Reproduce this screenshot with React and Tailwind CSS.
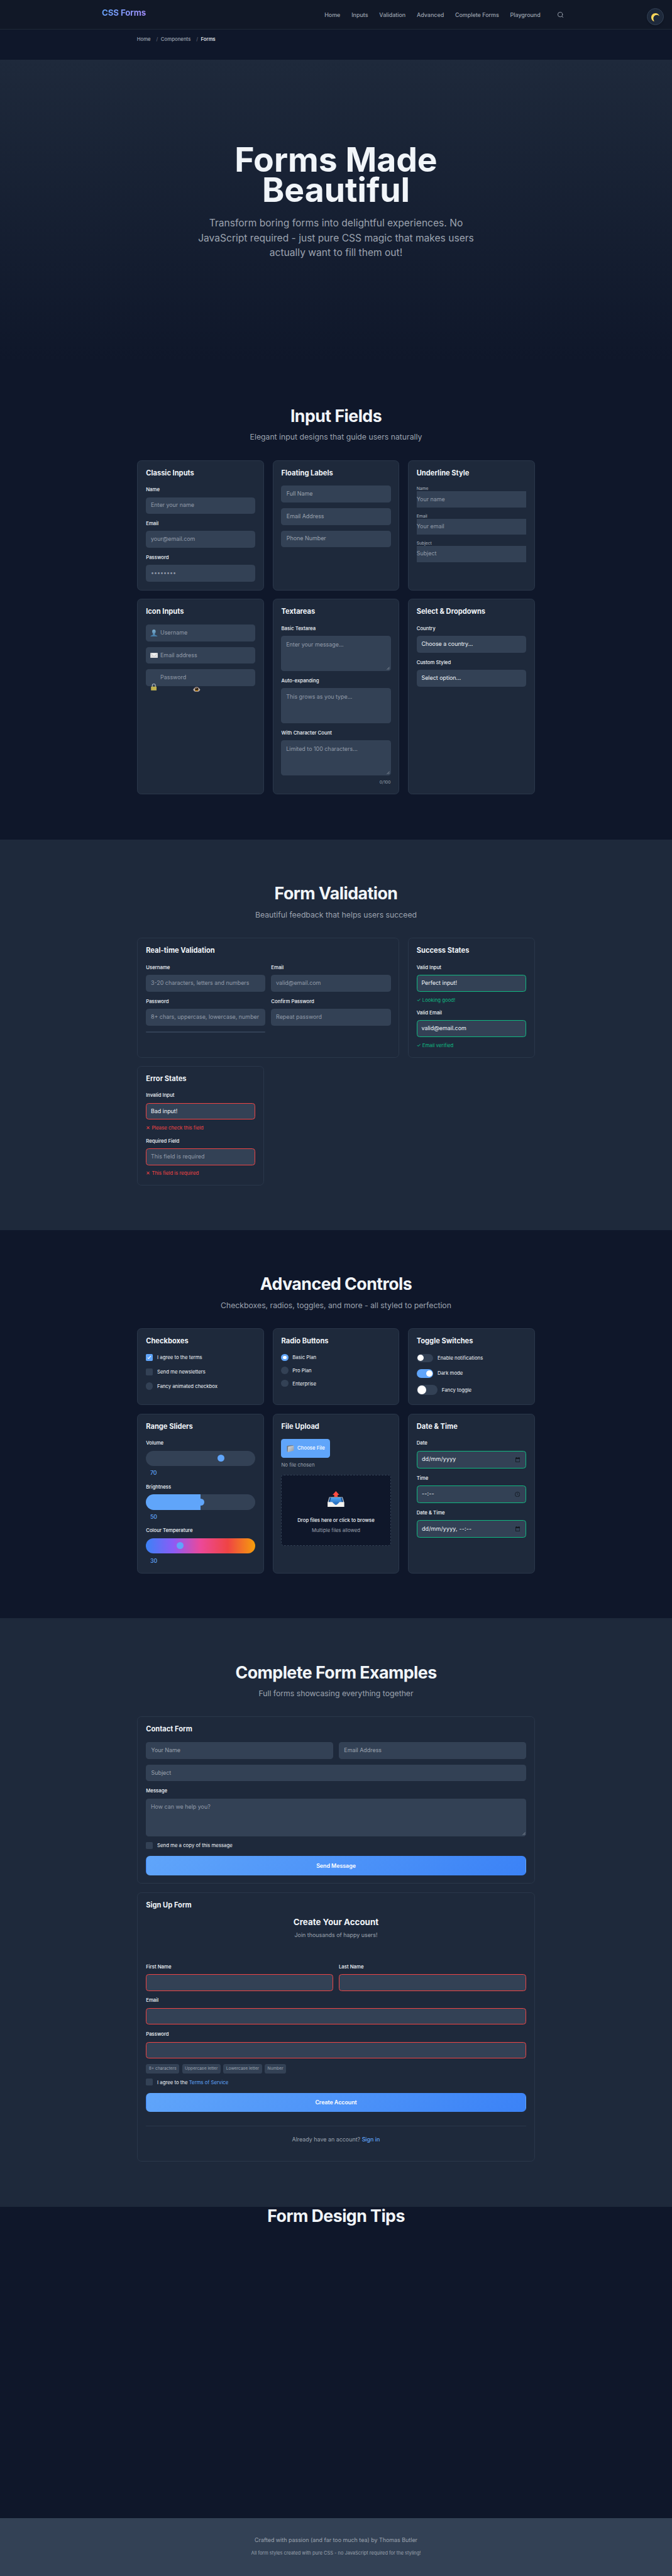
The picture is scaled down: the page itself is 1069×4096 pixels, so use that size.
import { Search } from "lucide-react";

function MoonIcon() {
  return (
    <svg className="w-6 h-6" viewBox="0 0 24 24">
      <defs>
        <linearGradient id="moon" x1="0" y1="0" x2="1" y2="1">
          <stop offset="0" stopColor="#f5b92e" />
          <stop offset="0.35" stopColor="#ffe066" />
          <stop offset="1" stopColor="#f2b632" />
        </linearGradient>
      </defs>
      <path d="M9 24 C3 22 0 17 0 12 C0 5 5 0 12 0 C17.5 0 22 3.5 24 9 C20 4 13.500 3.800 9.500 7 C5 10.700 4.800 18 9 24Z" fill="url(#moon)" />
    </svg>
  );
}

function UserIcon() {
  return (
    <svg className="w-[21px] h-[21px]" viewBox="0 0 21 21">
      <defs>
        <linearGradient id="bust" x1="0" y1="0" x2="0" y2="1">
          <stop offset="0" stopColor="#7fb0cf" />
          <stop offset="1" stopColor="#3d76a3" />
        </linearGradient>
      </defs>
      <path d="M10.500 0 C13.800 0 15.700 2.400 15.500 6 C15.300 9 14.200 11 13 12.200 C13 14.500 13.600 15.300 15.500 16 C18.500 17 20.500 17.800 21 21 H0 C.5 17.800 2.500 17 5.500 16 C7.400 15.300 8 14.500 8 12.200 C6.800 11 5.700 9 5.500 6 C5.300 2.400 7.200 0 10.500 0Z" fill="url(#bust)" />
    </svg>
  );
}

function MailIcon() {
  return (
    <svg className="w-[22px] h-[15px]" viewBox="0 0 22 15">
      <rect x="0.300" y="0.300" width="21.400" height="14.400" rx="1" fill="#e4e4e4" stroke="#bdbdbd" strokeWidth=".6" />
      <path d="M1 14 L8 7.500 M21 14 L14 7.500" stroke="#bcbcbc" strokeWidth=".8" />
      <path d="M1 1 L10 9.500 Q11 10.300 12 9.500 L21 1" fill="#f3f3f3" stroke="#a9a9a9" strokeWidth=".9" />
    </svg>
  );
}

function LockIcon() {
  return (
    <svg className="w-[17px] h-[20px]" viewBox="0 0 17 20">
      <path d="M4 10 V5.500 C4 2.500 6 1 8.500 1 S13 2.500 13 5.500 V10" fill="none" stroke="#b4bcc4" strokeWidth="1.900" />
      <rect x="0.500" y="8.500" width="16" height="11" rx="1" fill="#c9ba55" />
      <path d="M.5 11.500h16M.5 14h16M.5 16.500h16" stroke="#a89a3f" strokeWidth=".8" />
    </svg>
  );
}

function EyeIcon() {
  return (
    <svg className="w-[21px] h-[16px]" viewBox="0 0 21 16">
      <path d="M0 8.500 C3 3 7 0 10.500 0 S18 3 21 8.500 C18 13 14.500 16 10.500 16 S3 13 0 8.500Z" fill="#8b7c7c" />
      <path d="M1.500 8.500 C4 4.500 7.500 2 10.500 2 S17 4.500 19.500 8.500 C17 12 14 14 10.500 14 S4 12 1.500 8.500Z" fill="#d8d3d3" />
      <circle cx="10.500" cy="7.500" r="5.400" fill="#4a3012" />
      <path d="M6 8.500 A4.600 4.600 0 0 0 15 8.500 L12 9.500 H9Z" fill="#d3951f" />
      <circle cx="10.500" cy="6.800" r="2.500" fill="#120a05" />
      <circle cx="9" cy="4.800" r="1" fill="#efe9e2" />
    </svg>
  );
}

function FolderIcon() {
  return (
    <svg className="w-[21px] h-[20px]" viewBox="0 0 21 20">
      <defs>
        <linearGradient id="folder" x1="0" y1="0" x2="1" y2="1">
          <stop offset="0" stopColor="#d7dbdf" />
          <stop offset="1" stopColor="#8f969d" />
        </linearGradient>
      </defs>
      <path d="M1 2 L8 1 L9.500 0.300 L18 0.500 L19.500 2 V4 L3 19 L1 17Z" fill="#6c737a" />
      <path d="M4 5.500 Q4 4 5.500 3.800 L19 1.500 Q20.500 1.300 20.500 3 V14 Q20.500 15.300 19 15.800 L4.500 19.800 Q3 20 3 18.500Z" fill="url(#folder)" />
    </svg>
  );
}

function TrayIcon() {
  return (
    <svg className="w-[48px] h-[46px]" viewBox="0 0 48 46">
      <defs>
        <linearGradient id="tray" x1="0" y1="0" x2="0" y2="1">
          <stop offset="0" stopColor="#47a0f2" />
          <stop offset="1" stopColor="#2a6cb8" />
        </linearGradient>
      </defs>
      <path d="M5 17 H43 L47.500 32 V44 Q47.500 46 45.500 46 H2.500 Q.5 46 .5 44 V32Z" fill="#d8d6d2" />
      <path d="M6.500 18.500 H41.500 L45 31.500 H33 L24 40 L15 31.500 H3Z" fill="url(#tray)" />
      <path d="M6.500 18.500 H10 L7 31 H3Z M41.500 18.500 H38 L41 31 H45Z" fill="#1d4f8d" />
      <path d="M.5 31.500 H13 C15.500 31.500 16.500 38.500 24 38.500 S32.500 31.500 35 31.500 H47.500 V44 Q47.500 46 45.500 46 H2.500 Q.5 46 .5 44Z" fill="#f3f2ef" />
      <path d="M13.500 31.500 H34.500 L27 38 Q24 40 21 38Z" fill="#2f78c8" />
      <path d="M24 0 L33.500 11 H29 V16 H19 V11 H14.500Z" fill="#ff4d42" />
    </svg>
  );
}

function CalendarIcon() {
  return (
    <svg className="w-[13px] h-[14px]" viewBox="0 0 13 14">
      <path d="M0 1.400h2V0h1.500v1.400h6V0H11v1.400h2V14H0Z M1.400 5v7.600h10.200V5Z" fill="#10151c" fillRule="evenodd" />
    </svg>
  );
}

function ClockIcon() {
  return (
    <svg className="w-[15px] h-[15px]" viewBox="0 0 15 15">
      <circle cx="7.500" cy="7.500" r="6.700" fill="none" stroke="#10151c" strokeWidth="1.400" />
      <path d="M7.500 3.500 V7.800 L10.300 9.800" fill="none" stroke="#10151c" strokeWidth="1.200" />
    </svg>
  );
}

function Grip() {
  return (
    <svg className="absolute right-[2px] bottom-[3px] w-[9px] h-[9px]" viewBox="0 0 9 9">
      <path d="M1 8.500 L8.500 1 M5 8.500 L8.500 5" stroke="#c3c8ce" strokeWidth="1" />
    </svg>
  );
}

function Card({ title, className = "", children }) {
  return (
    <div className={"box-border rounded-[12px] border border-[#2a374a] bg-[#1e293b] p-[23.2px] " + className}>
      <h3 className="mb-6 text-[20px] leading-[24px] font-bold text-[#f1f5f9]">{title}</h3>
      {children}
    </div>
  );
}

function Label({ children }) {
  return <div className="mb-[10.8px] text-[14px] leading-[22px] font-medium text-[#f1f5f9]">{children}</div>;
}

const tones = {
  none: "border-[#334155]",
  ok: "border-[#10b981]",
  bad: "border-[#ef4444]",
};

function Input({ label, text, tone = "none", filled = false, height = "h-12", pad = "px-[12.2px]", children }) {
  return (
    <div>
      {label && <Label>{label}</Label>}
      <div className={"flex items-center rounded-[8px] border-2 bg-[#334155] text-[16px] leading-none " + height + " " + pad + " " + tones[tone] + " " + (filled ? "text-[#f1f5f9]" : "text-[#929ba9]")}>
        <span className="whitespace-nowrap">{text}</span>
        {children}
      </div>
    </div>
  );
}

function Floating({ text }) {
  return <div className="flex h-12 items-center rounded-[8px] bg-[#334155] px-[15px] text-[16px] leading-none text-[#9ca3af]">{text}</div>;
}

function Underline({ label, text }) {
  return (
    <div>
      <div className="h-4 text-[12px] leading-[18px] font-medium text-[#9ca3af]">{label}</div>
      <div className="flex h-[46px] items-center bg-[#334155] text-[16px] leading-none text-[#929ba9]">{text}</div>
    </div>
  );
}

function IconInput({ text, icon }) {
  return (
    <div className="relative flex h-12 items-center rounded-[8px] bg-[#334155] pl-[41px] text-[16px] leading-none text-[#929ba9]">
      {icon && <span className="absolute left-3 top-0 flex h-12 items-center">{icon}</span>}
      {text}
    </div>
  );
}

function Area({ label, text, grip = true, height = "h-[100px]" }) {
  return (
    <div>
      <Label>{label}</Label>
      <div className={"relative rounded-[8px] bg-[#334155] px-[14px] pt-[14px] text-[16px] leading-[21px] text-[#929ba9] " + height}>
        {text}
        {grip && <Grip />}
      </div>
    </div>
  );
}

function Message({ good, children }) {
  return (
    <div className={"h-[33.2px] pt-3 text-[14px] leading-[22px] " + (good ? "text-[#10b981]" : "text-[#ef4444]")}>
      {children}
    </div>
  );
}

function Check({ checked, round, children }) {
  return (
    <div className="flex items-center gap-3 text-[14px] leading-5 text-[#f1f5f9]">
      <span className={"flex h-5 w-5 items-center justify-center " + (round ? "rounded-full " : "rounded-[3px] ") + (checked ? "bg-[#60a5fa]" : "bg-[#334155]")}>
        {checked && (
          <svg className="h-3 w-3" viewBox="0 0 12 12">
            <path d="M1.500 6.500 L4.500 9.500 L10.300 2" fill="none" stroke="#fff" strokeWidth="2" />
          </svg>
        )}
      </span>
      <span className="relative top-px">{children}</span>
    </div>
  );
}

function Radio({ checked, children }) {
  return (
    <div className="flex items-center gap-3 text-[14px] leading-5 text-[#f1f5f9]">
      <span className={"flex h-5 w-5 items-center justify-center rounded-full " + (checked ? "bg-[#60a5fa]" : "bg-[#334155]")}>
        {checked && <span className="h-[10px] w-[10px] rounded-full bg-white" />}
      </span>
      <span className="relative top-px">{children}</span>
    </div>
  );
}

function Toggle({ on, large, children }) {
  return (
    <div className="flex items-center gap-3 text-[14px] leading-5 text-[#f1f5f9]">
      <span className={"flex items-center rounded-full px-[3px] " + (large ? "h-[30px] w-[60px] " : "h-6 w-12 ") + (on ? "justify-end bg-[#60a5fa]" : "bg-[#334155]")}>
        <span className={"rounded-full bg-white " + (large ? "h-6 w-6" : "h-[18px] w-[18px]")} />
      </span>
      <span>{children}</span>
    </div>
  );
}

function Slider({ label, value, track }) {
  return (
    <div>
      <Label>{label}</Label>
      <div className={"flex h-11 items-center rounded-full " + track}>
        <span className="h-5 w-5 rounded-full bg-[#60a5fa]" style={{ marginLeft: `${(value / 100) * 292.67}px` }} />
      </div>
      <div className="h-[32.2px] pt-2 pl-3 text-[16px] leading-[24.4px] font-medium text-[#60a5fa]">{value}</div>
    </div>
  );
}

function Heading({ title, sub }) {
  return (
    <div className="mb-[48.4px] text-center">
      <h2 className="text-[48px] leading-[52.8px] font-bold tracking-[-0.02em] text-[#f1f5f9]">{title}</h2>
      <p className="mt-4 text-[22px] leading-[35.2px] text-[#9ca3af]">{sub}</p>
    </div>
  );
}

function Button({ children }) {
  return (
    <div className="flex h-[54px] items-center justify-center rounded-[12px] border-2 border-transparent bg-linear-[135deg,#60a5fa,#3b82f6] text-[16px] font-semibold tracking-[-0.1px] text-white">
      {children}
    </div>
  );
}

const nav = ["Home", "Inputs", "Validation", "Advanced", "Complete Forms", "Playground"];
const rules = ["8+ characters", "Uppercase letter", "Lowercase letter", "Number"];

export default function App() {
  return (
    <div className="h-[4096px] w-full overflow-hidden bg-[#0f172a]">
      <div className="h-[7358px] w-full bg-[#0f172a] font-['Inter',sans-serif] text-[16px] text-[#f1f5f9] [zoom:0.5567]">
        <header className="relative flex h-[85px] items-start border-b border-[#1f2937] bg-[#111827] pr-[308px] pl-[291px]">
          <div className="mt-[22px] bg-linear-[135deg,#60a5fa,#a78bfa] bg-clip-text text-[24px] leading-[30px] font-bold tracking-[-0.01em] text-transparent">CSS Forms</div>
          <nav className="mt-[30px] ml-auto flex gap-8 text-[16px] leading-6 font-medium text-[#9ca3af]">
            {nav.map((n) => (
              <span key={n}>{n}</span>
            ))}
          </nav>
          <Search className="mt-[32px] ml-12 h-5 w-5 text-[#9ca3af]" strokeWidth={2} />
          <div className="absolute top-6 right-6 flex h-12 w-12 items-center justify-center rounded-full border-2 border-[#334155] bg-[#1e293b] pt-[2px] shadow-md">
            <MoonIcon />
          </div>
        </header>

        <div className="flex h-[85px] gap-2 pt-[16px] pl-[391px] text-[14px] leading-[22px] font-medium text-[#9ca3af]">
          <span>Home</span>
          <span className="ml-2 font-normal text-[#6b7280]">/</span>
          <span>Components</span>
          <span className="ml-2 font-normal text-[#6b7280]">/</span>
          <span className="text-[#f1f5f9]">Forms</span>
        </div>

        <section className="h-[864px] bg-linear-to-b from-[#1e293b] to-[#0f172a] pt-[242.6px] text-center">
          <h1 className="text-[96px] leading-[86.4px] font-bold text-[#f1f5f9]">
            Forms Made
            <br />
            Beautiful
          </h1>
          <p className="mt-[31.6px] text-[28px] leading-[42px] text-[#9ca3af]">
            Transform boring forms into delightful experiences. No
            <br />
            JavaScript required - just pure CSS magic that makes users
            <br />
            actually want to fill them out!
          </p>
        </section>

        <section className="h-[1364.4px] pt-32">
          <Heading title="Input Fields" sub="Elegant input designs that guide users naturally" />
          <div className="mx-auto grid w-[1136px] grid-cols-3 gap-6">
            <Card title="Classic Inputs" className="h-[372.4px]">
              <div className="flex flex-col gap-4">
                <Input label="Name" text="Enter your name" />
                <Input label="Email" text="your@email.com" />
                <Input label="Password" text="••••••••" />
              </div>
            </Card>
            <Card title="Floating Labels" className="h-[372.4px]">
              <div className="flex flex-col gap-4">
                <Floating text="Full Name" />
                <Floating text="Email Address" />
                <Floating text="Phone Number" />
              </div>
            </Card>
            <Card title="Underline Style" className="h-[372.4px]">
              <div className="flex flex-col gap-4">
                <Underline label="Name" text="Your name" />
                <Underline label="Email" text="Your email" />
                <Underline label="Subject" text="Subject" />
              </div>
            </Card>
            <Card title="Icon Inputs" className="h-[558.8px]">
              <div className="relative flex flex-col gap-4">
                <IconInput text="Username" icon={<UserIcon />} />
                <IconInput text="Email address" icon={<MailIcon />} />
                <IconInput text="Password" />
                <span className="absolute top-[169px] left-[14px]">
                  <LockIcon />
                </span>
                <span className="absolute top-[177px] left-[135px]">
                  <EyeIcon />
                </span>
              </div>
            </Card>
            <Card title="Textareas" className="h-[558.8px]">
              <div className="flex flex-col gap-4">
                <Area label="Basic Textarea" text="Enter your message..." />
                <Area label="Auto-expanding" text="This grows as you type..." grip={false} />
                <Area label="With Character Count" text="Limited to 100 characters..." />
              </div>
              <div className="mt-[11px] text-right text-[12px] leading-[19.4px] text-[#9ca3af]">0/100</div>
            </Card>
            <Card title="Select & Dropdowns" className="h-[558.8px]">
              <div className="flex flex-col gap-4">
                <Input label="Country" text="Choose a country..." filled />
                <Input label="Custom Styled" text="Select option..." filled />
              </div>
            </Card>
          </div>
        </section>

        <section className="h-[1115.400px] bg-[#1e293b] pt-32">
          <Heading title="Form Validation" sub="Beautiful feedback that helps users succeed" />
          <div className="mx-auto grid w-[1136px] grid-cols-3 gap-6">
            <Card title="Real-time Validation" className="col-span-2 h-[341.8px]">
              <div className="grid grid-cols-2 gap-4">
                <Input label="Username" text="3-20 characters, letters and numbers" />
                <Input label="Email" text="valid@email.com" />
                <div>
                  <Input label="Password" text="8+ chars, uppercase, lowercase, number" />
                  <div className="mt-4 h-1 rounded-[2px] bg-[#334155]" />
                </div>
                <Input label="Confirm Password" text="Repeat password" />
              </div>
            </Card>
            <Card title="Success States" className="h-[341.8px]">
              <Input label="Valid Input" text="Perfect input!" tone="ok" filled />
              <Message good>✓ Looking good!</Message>
              <div className="h-4" />
              <Input label="Valid Email" text="valid@email.com" tone="ok" filled />
              <Message good>✓ Email verified</Message>
            </Card>
            <Card title="Error States" className="h-[341.8px]">
              <Input label="Invalid Input" text="Bad input!" tone="bad" filled />
              <Message>✕ Please check this field</Message>
              <div className="h-4" />
              <Input label="Required Field" text="This field is required" tone="bad" />
              <Message>✕ This field is required</Message>
            </Card>
          </div>
        </section>

        <section className="h-[1108.9px] pt-32">
          <Heading title="Advanced Controls" sub="Checkboxes, radios, toggles, and more - all styled to perfection" />
          <div className="mx-auto grid w-[1136px] grid-cols-3 gap-6">
            <Card title="Checkboxes" className="h-[219.4px]">
              <div className="flex flex-col gap-[21px]">
                <Check checked>I agree to the terms</Check>
                <Check>Send me newsletters</Check>
                <Check round>Fancy animated checkbox</Check>
              </div>
            </Card>
            <Card title="Radio Buttons" className="h-[219.4px]">
              <div className="flex flex-col gap-[17px]">
                <Radio checked>Basic Plan</Radio>
                <Radio>Pro Plan</Radio>
                <Radio>Enterprise</Radio>
              </div>
            </Card>
            <Card title="Toggle Switches" className="h-[219.4px]">
              <div className="flex flex-col gap-5">
                <Toggle>Enable notifications</Toggle>
                <Toggle on>Dark mode</Toggle>
                <Toggle large>Fancy toggle</Toggle>
              </div>
            </Card>
            <Card title="Range Sliders" className="h-[457px]">
              <div className="flex flex-col gap-4">
                <Slider label="Volume" value={70} track="bg-[#334155]" />
                <Slider label="Brightness" value={50} track="bg-[linear-gradient(90deg,#60a5fa_50%,#334155_50%)]" />
                <Slider label="Colour Temperature" value={30} track="bg-[linear-gradient(90deg,#3b82f6,#8b5cf6,#ec4899,#ef4444,#f59e0b)]" />
              </div>
            </Card>
            <Card title="File Upload" className="h-[457px]">
              <div className="flex h-[54px] w-[140px] items-center gap-[9px] rounded-[8px] bg-[#60a5fa] pl-4 text-[14px] font-medium whitespace-nowrap text-white">
                <FolderIcon />
                Choose File
              </div>
              <div className="mt-2 text-[14px] leading-[22.4px] text-[#9ca3af]">No file chosen</div>
              <div className="mt-[18px] flex h-[202px] flex-col items-center rounded-[8px] border-2 border-dashed border-[#334155] bg-[#0f172a] pt-[44px]">
                <TrayIcon />
                <div className="mt-[26px] text-[14px] leading-[22px] font-medium text-[#f1f5f9]">Drop files here or click to browse</div>
                <div className="mt-[7px] text-[14px] leading-[22px] text-[#9ca3af]">Multiple files allowed</div>
              </div>
            </Card>
            <Card title="Date & Time" className="h-[457px]">
              <div className="flex flex-col gap-4">
                <Input label="Date" text="dd/mm/yyyy" tone="ok" filled height="h-[50.6px]" pad="pl-[13px] pr-[15px] justify-between tracking-[0.3px]">
                  <CalendarIcon />
                </Input>
                <Input label="Time" text="--:--" tone="ok" filled height="h-[50.6px]" pad="pl-[13px] pr-[16px] justify-between tracking-[0.3px]">
                  <ClockIcon />
                </Input>
                <Input label="Date & Time" text="dd/mm/yyyy, --:--" tone="ok" filled height="h-[50.6px]" pad="pl-[13px] pr-[15px] justify-between tracking-[0.3px]">
                  <CalendarIcon />
                </Input>
              </div>
            </Card>
          </div>
        </section>

        <section className="h-[1680.300px] bg-[#1e293b] pt-32">
          <Heading title="Complete Form Examples" sub="Full forms showcasing everything together" />
          <div className="mx-auto flex w-[1136px] flex-col gap-6">
            <Card title="Contact Form" className="h-[477.6px]">
              <div className="grid grid-cols-2 gap-4">
                <Floating text="Your Name" />
                <Floating text="Email Address" />
                <div className="col-span-2">
                  <Floating text="Subject" />
                </div>
                <div className="col-span-2">
                  <Area label="Message" text="How can we help you?" height="h-[108px]" />
                </div>
              </div>
              <div className="mt-4 mb-[21px]">
                <Check>Send me a copy of this message</Check>
              </div>
              <Button>Send Message</Button>
            </Card>
            <Card title="Sign Up Form" className="h-[769.8px]">
              <div className="text-center">
                <div className="text-[24px] leading-[28px] font-bold text-[#f1f5f9]">Create Your Account</div>
                <div className="mt-[9.400px] text-[16px] leading-[26px] text-[#9ca3af]">Join thousands of happy users!</div>
              </div>
              <div className="mt-[64.600px] grid grid-cols-2 gap-4">
                <Input label="First Name" tone="bad" />
                <Input label="Last Name" tone="bad" />
                <div className="col-span-2">
                  <Input label="Email" tone="bad" />
                </div>
                <div className="col-span-2">
                  <Input label="Password" tone="bad" />
                </div>
              </div>
              <div className="mt-4 flex gap-2 text-[12px] leading-[26px] text-[#9ca3af]">
                {rules.map((r) => (
                  <span key={r} className="rounded-[6px] bg-[#334155] px-2">
                    {r}
                  </span>
                ))}
              </div>
              <div className="mt-[15px] mb-[21px]">
                <Check>
                  I agree to the <span className="text-[#60a5fa]">Terms of Service</span>
                </Check>
              </div>
              <Button>Create Account</Button>
              <div className="mt-10 border-t border-[#2a374a] pt-6 text-center text-[16px] leading-[26px] text-[#9ca3af]">
                Already have an account? <span className="font-medium text-[#60a5fa]">Sign in</span>
              </div>
            </Card>
          </div>
        </section>

        <section className="h-[889px]">
          <h2 className="text-center text-[48px] leading-[52.8px] font-bold tracking-[-0.02em] text-[#f1f5f9]">Form Design Tips</h2>
        </section>

        <footer className="h-[168px] bg-[#334155] pt-[51px] text-center text-[#9ca3af]">
          <p className="text-[16px] leading-[26px]">Crafted with passion (and far too much tea) by Thomas Butler</p>
          <p className="mt-[14px] text-[13.33px] leading-[22px]">All form styles created with pure CSS - no JavaScript required for the styling!</p>
        </footer>
      </div>
    </div>
  );
}
